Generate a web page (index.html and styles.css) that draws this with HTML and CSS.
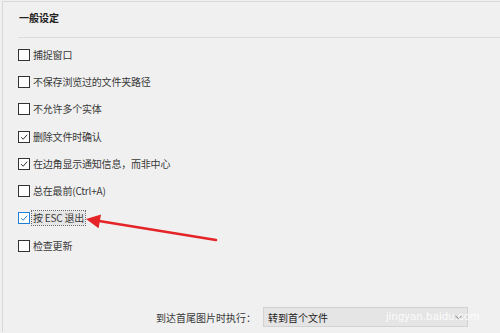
FILE: index.html
```html
<!DOCTYPE html>
<html lang="zh-CN">
<head>
    <meta charset="UTF-8">
    <title>一般设定</title>
    <link rel="stylesheet" href="styles.css">
</head>
<body>
    <div class="panel">
        <h4 class="title">一般设定</h4>
        <hr class="sep">

        <!-- option list -->
        <ul class="options">
            <li><span class="box"></span><span class="label">捕捉窗口</span></li>
            <li><span class="box"></span><span class="label">不保存浏览过的文件夹路径</span></li>
            <li><span class="box"></span><span class="label">不允许多个实体</span></li>
            <li><span class="box checked"><svg viewBox="0 0 12 12"><path d="M2.5 6.2 L5 8.7 L9.8 3.2" /></svg></span><span class="label">删除文件时确认</span></li>
            <li><span class="box checked"><svg viewBox="0 0 12 12"><path d="M2.5 6.2 L5 8.7 L9.8 3.2" /></svg></span><span class="label">在边角显示通知信息，而非中心</span></li>
            <li><span class="box"></span><span class="label">总在最前(Ctrl+A)</span></li>
            <li><span class="box checked focus"><svg viewBox="0 0 12 12"><path d="M2.5 6.2 L5 8.7 L9.8 3.2" /></svg></span><span class="label focused">按 ESC 退出</span></li>
            <li><span class="box"></span><span class="label">检查更新</span></li>
        </ul>

        <div class="footer">
            <span class="footer-label">到达首尾图片时执行：</span>
            <div class="select">
                <span>转到首个文件</span>
                <svg class="chevron" viewBox="0 0 8 5"><path d="M0.5 0.5 L4 4 L7.5 0.5" /></svg>
            </div>
            <span class="watermark">jingyan.baidu.com</span>
        </div>
    </div>

    <!-- red annotation arrow -->
    <svg class="arrow" width="500" height="333" viewBox="0 0 500 333">
        <line x1="216" y1="240" x2="96" y2="220.5" />
        <polygon points="86,219 101,214.6 98.6,228.2" />
    </svg>
</body>
</html>
```

FILE: styles.css
```css
body {
    margin: 0;
    background-color: #f0f0f0;
    font-family: "Noto Sans CJK SC", "Liberation Sans", sans-serif;
    color: #383838;
    width: 500px;
    height: 333px;
    overflow: hidden;
    position: relative;
}
.panel {
    margin: 1px 0 0 2px;
    border-top: 1px solid #d8d8d8;
    border-left: 1px solid #d8d8d8;
    height: 331px;
    padding-left: 15px;
    box-sizing: border-box;
}
.title {
    margin: 6px 0 0 1px;
    font-size: 10px;
    font-weight: bold;
    line-height: 20px;
    color: #222;
}
.sep {
    margin: 9px 0 0 0;
    border: none;
    border-top: 1px solid #dcdcdc;
    height: 0;
}
.options {
    list-style: none;
    margin: 3px 0 0 0;
    padding: 0;
}
.options li {
    height: 27.3px;
    display: flex;
    align-items: center;
    font-size: 10px;
}
.box {
    width: 10px;
    height: 10px;
    border: 1px solid #333;
    background: #fff;
    margin-right: 2px;
    display: flex;
}
.box svg {
    width: 10px;
    height: 10px;
    fill: none;
    stroke: #333;
    stroke-width: 1.2;
}
.box.focus {
    border-color: #1e7fd8;
}
.box.focus svg {
    stroke: #1e7fd8;
}
.label {
    line-height: 14px;
    padding: 0 1px;
    letter-spacing: -0.2px;
}
.label.focused {
    outline: 1px dotted #666;
    background: #e6e6e6;
}
.footer {
    position: relative;
    display: flex;
    align-items: center;
    margin-top: 48px;
    padding-left: 138px;
    font-size: 10px;
}
.footer-label {
    width: 107px;
}
.select {
    width: 194px;
    height: 18px;
    border: 1px solid #d2d2d2;
    background: #e5e5e5;
    display: flex;
    align-items: center;
    justify-content: space-between;
    padding: 0 5px 0 4px;
    color: #222;
}
.chevron {
    width: 7px;
    height: 5px;
    fill: none;
    stroke: #666;
    stroke-width: 1;
}
.watermark {
    position: absolute;
    left: 368px;
    top: 3px;
    color: rgba(255, 255, 255, 0.9);
    font-family: "Liberation Sans", sans-serif;
    font-size: 11px;
    letter-spacing: 0.3px;
}
.arrow {
    position: absolute;
    left: 0;
    top: 0;
    pointer-events: none;
}
.arrow line {
    stroke: #e52428;
    stroke-width: 2.6;
    stroke-linecap: round;
}
.arrow polygon {
    fill: #e52428;
}
```
